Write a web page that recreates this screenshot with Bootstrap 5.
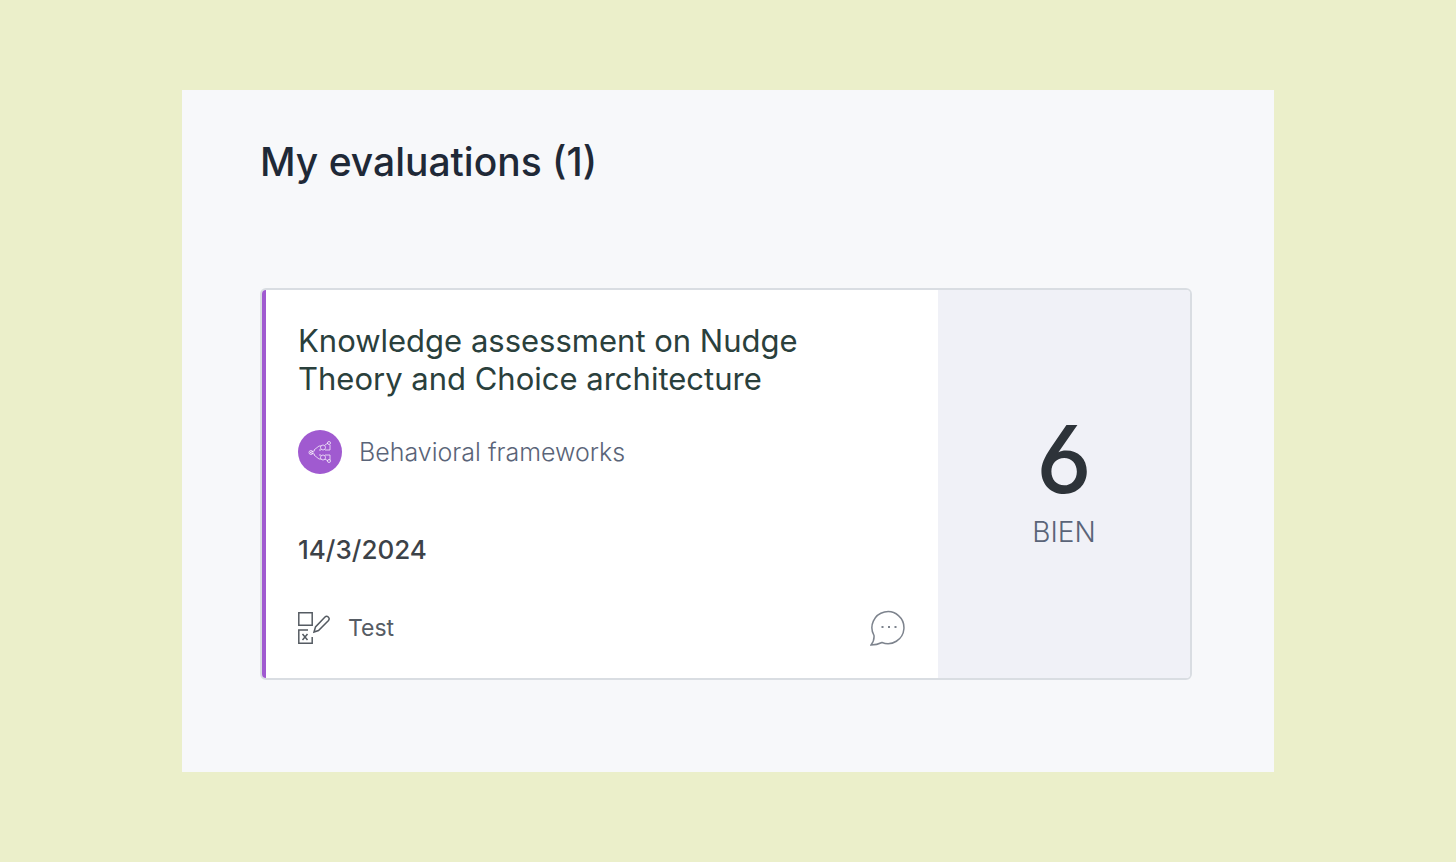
<!DOCTYPE html>
<html lang="en">
<head>
<meta charset="utf-8">
<meta name="viewport" content="width=device-width, initial-scale=1">
<title>My evaluations</title>
<link href="https://cdn.jsdelivr.net/npm/bootstrap@5.3.0/dist/css/bootstrap.min.css" rel="stylesheet">
<style>
  body { background: #ebefca; font-family: Inter, "Liberation Sans", sans-serif; color: #1f2937; }
  .panel { background: #f7f8fa; width: 75%; padding: 48px 82px 92px 78px; }
  .page-title { font-size: 39px; line-height: 48px; font-weight: 500; margin-bottom: 102px; }
  .evaluation { background: #fff; border: 2px solid #d9dde2; border-radius: 6px; }
  .evaluation-main { border-left: 4px solid #a05ad0; padding: 32px; }
  .evaluation-title { font-size: 31px; line-height: 38px; font-weight: 400; color: #2a403c; max-width: 520px; margin-bottom: 32px; }
  .topic { font-size: 25px; line-height: 44px; font-weight: 300; color: #5a6478; gap: 17px; }
  .topic-icon { width: 44px; height: 44px; background: #a05ad0; }
  .date { font-size: 26px; line-height: 36px; font-weight: 500; color: #3c4248; margin: 58px 0 42px; }
  .kind { font-size: 23px; line-height: 36px; color: #565c64; font-weight: 400; gap: 18px; }
  .score { width: 252px; background: #f0f1f7; padding-bottom: 16px; }
  .score-value { font-size: 94px; line-height: 112px; font-weight: 500; color: #2d3339; font-feature-settings: "cv03", "ss01"; }
  .score-label { font-size: 28px; line-height: 34px; font-weight: 300; color: #5a6478; }
</style>
</head>
<body class="min-vh-100 d-flex align-items-center justify-content-center">
<main class="panel">
  <h1 class="page-title">My evaluations (1)</h1>
  <article class="evaluation d-flex overflow-hidden">
    <div class="evaluation-main flex-grow-1">
      <h2 class="evaluation-title">Knowledge assessment on Nudge Theory and Choice architecture</h2>
      <div class="topic d-flex align-items-center">
        <span class="topic-icon rounded-circle flex-shrink-0">
          <svg class="d-block" width="44" height="44" viewBox="0 0 44 44" fill="none" stroke="#fff" stroke-opacity=".7" stroke-width="1" aria-hidden="true">
            <path d="M16 20l5-4h2M16 25l5 4h2M12 22.500l5-2M12 22.500l5 2M27 15l3-2M27 29l3 2M32 15v5M32 25v5M21 20h2M27 20h5M21 25h2M27 25h5"/>
            <circle cx="13" cy="22.500" r="2"/><circle cx="25" cy="17.500" r="2.500"/><circle cx="25" cy="27.500" r="2.500"/><circle cx="31" cy="13" r="1.500"/><circle cx="31" cy="31" r="1.500"/>
          </svg>
        </span>
        <span>Behavioral frameworks</span>
      </div>
      <p class="date"><time datetime="2024-03-14">14/3/2024</time></p>
      <div class="d-flex align-items-center justify-content-between">
        <div class="kind d-flex align-items-center">
          <svg width="32" height="32" viewBox="0 0 32 32" fill="none" stroke="#555b62" stroke-width="1.500" aria-hidden="true">
            <path d="M.8.8h13.400v12.500H.8zM10 18H.8v13.200h13.400V25M4.500 22l5 6M9.500 22l-5 6"/>
            <path d="M16 20l1.500-5L27 5c2-2 5.500 1 3.500 3.500l-10 10z"/>
          </svg>
          <span>Test</span>
        </div>
        <button type="button" class="btn p-0 border-0 lh-1" aria-label="Comments">
          <svg class="d-block" width="36" height="36" viewBox="0 0 36 36" fill="none" stroke="#7d838d" stroke-width="1.500" aria-hidden="true">
            <path d="M4 25.500A16 16 0 1 1 12 32.500Q7 35 1 35q3.500-4 3-9.500z"/>
            <path d="M11.500 17h2M18 17h2M24.500 17h2" stroke-width="2"/>
          </svg>
        </button>
      </div>
    </div>
    <div class="score d-flex flex-column align-items-center justify-content-center flex-shrink-0">
      <div class="score-value">6</div>
      <div class="score-label">BIEN</div>
    </div>
  </article>
</main>
<script src="https://cdn.jsdelivr.net/npm/bootstrap@5.3.0/dist/js/bootstrap.bundle.min.js"></script>
</body>
</html>
